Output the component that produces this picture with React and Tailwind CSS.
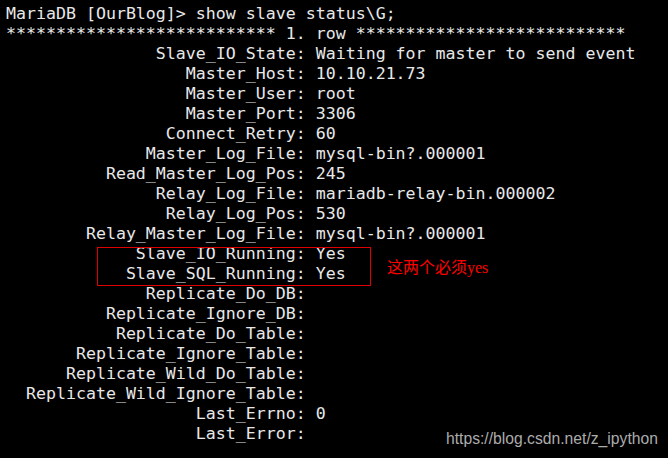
import React from "react";

const rows = [
  ["Slave_IO_State", "Waiting for master to send event"],
  ["Master_Host", "10.10.21.73"],
  ["Master_User", "root"],
  ["Master_Port", "3306"],
  ["Connect_Retry", "60"],
  ["Master_Log_File", "mysql-bin?.000001"],
  ["Read_Master_Log_Pos", "245"],
  ["Relay_Log_File", "mariadb-relay-bin.000002"],
  ["Relay_Log_Pos", "530"],
  ["Relay_Master_Log_File", "mysql-bin?.000001"],
  ["Slave_IO_Running", "Yes"],
  ["Slave_SQL_Running", "Yes"],
  ["Replicate_Do_DB", ""],
  ["Replicate_Ignore_DB", ""],
  ["Replicate_Do_Table", ""],
  ["Replicate_Ignore_Table", ""],
  ["Replicate_Wild_Do_Table", ""],
  ["Replicate_Wild_Ignore_Table", ""],
  ["Last_Errno", "0"],
  ["Last_Error", ""],
];

const stars = "*".repeat(27);

export default function App() {
  const lines = [
    "MariaDB [OurBlog]> show slave status\\G;",
    `${stars} 1. row ${stars}`,
    ...rows.map(([k, v]) => `${(k + ":").padStart(30)} ${v}`),
  ];

  return (
    <div className="relative w-[668px] h-[458px] bg-black overflow-hidden">
      <pre className="pl-[6px] pt-[4px] text-[16.6px] leading-[20px] text-[#e8e8e8] font-['DejaVu_Sans_Mono',monospace]">
        {lines.join("\n")}
      </pre>

      {/* annotation box around the running flags */}
      <div className="absolute left-[97px] top-[247px] w-[274px] h-[39px] border border-[#e00000]" />
      <div className="absolute left-[387px] top-[258px] text-[16px] leading-[20px] text-[#ff0000] font-['Liberation_Serif','Noto_Sans_CJK_SC',serif]">
        这两个必须yes
      </div>

      {/* watermark */}
      <div className="absolute left-[446px] top-[429px] text-[15.7px] leading-[20px] text-[#acacac] font-['Liberation_Sans',sans-serif]">
        https://blog.csdn.net/z_ipython
      </div>
    </div>
  );
}
